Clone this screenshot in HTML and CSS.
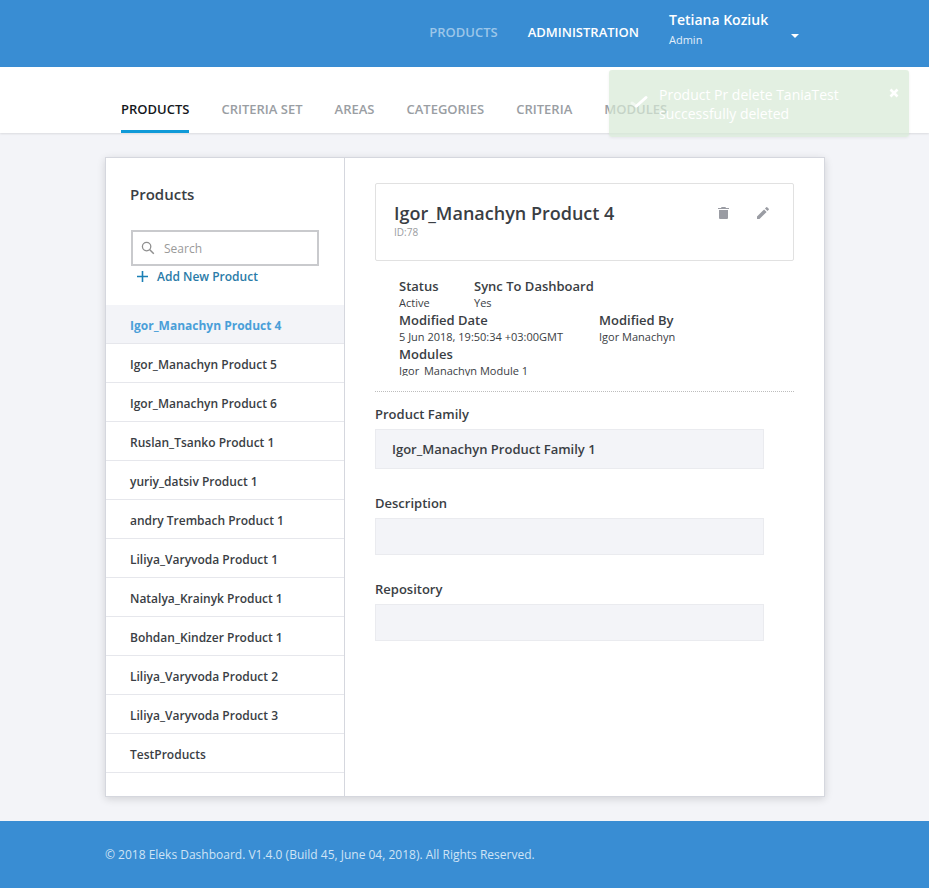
FILE: index.html
```html
<!DOCTYPE html>
<html lang="en">
<head>
    <meta charset="UTF-8">
    <title>Eleks Dashboard</title>
    <link rel="stylesheet" href="styles.css">
</head>
<body>
    <header class="top-bar">
        <nav class="top-nav">
            <a class="top-link top-link-dim">PRODUCTS</a>
            <a class="top-link">ADMINISTRATION</a>
        </nav>
        <div class="user-box">
            <div class="user-name">Tetiana Koziuk</div>
            <div class="user-role">Admin</div>
            <span class="user-caret"></span>
        </div>
    </header>

    <nav class="tabs">
        <a class="tab tab-active">PRODUCTS</a>
        <a class="tab">CRITERIA SET</a>
        <a class="tab">AREAS</a>
        <a class="tab">CATEGORIES</a>
        <a class="tab">CRITERIA</a>
        <a class="tab">MODULES</a>
    </nav>

    <div class="toast">
        <svg class="toast-check" width="20" height="20" viewBox="0 0 20 20"><path d="M3 13l4 3" fill="none" stroke="#fff" stroke-opacity="0.5" stroke-width="3" stroke-linecap="round"/><path d="M7.5 16L17 7.5" fill="none" stroke="#fff" stroke-width="3" stroke-linecap="round"/></svg>
        <div class="toast-text">Product Pr delete TaniaTest<br>successfully deleted</div>
        <svg class="toast-close" width="10" height="10" viewBox="0 0 10 10"><path d="M1.5 1.5l7 7M8.5 1.5l-7 7" fill="none" stroke="#fff" stroke-width="2.6"/></svg>
    </div>

    <main class="content">
        <div class="panel">
            <aside class="sidebar">
                <h2 class="sidebar-title">Products</h2>
                <div class="search">
                    <svg width="14" height="14" viewBox="0 0 14 14"><circle cx="5.6" cy="5.6" r="4.2" fill="none" stroke="#8f8f8f" stroke-width="1.3"/><path d="M8.8 8.8l4 4" stroke="#8f8f8f" stroke-width="1.5"/></svg>
                    <span class="search-text">Search</span>
                </div>
                <a class="add-link">
                    <svg width="11" height="11" viewBox="0 0 11 11"><path d="M5.5 0v11M0 5.5h11" stroke="#1b7fb5" stroke-width="1.6"/></svg>
                    Add New Product
                </a>
                <ul class="product-list">
                    <li class="product product-active">Igor_Manachyn Product 4</li>
                    <li class="product">Igor_Manachyn Product 5</li>
                    <li class="product">Igor_Manachyn Product 6</li>
                    <li class="product">Ruslan_Tsanko Product 1</li>
                    <li class="product">yuriy_datsiv Product 1</li>
                    <li class="product">andry Trembach Product 1</li>
                    <li class="product">Liliya_Varyvoda Product 1</li>
                    <li class="product">Natalya_Krainyk Product 1</li>
                    <li class="product">Bohdan_Kindzer Product 1</li>
                    <li class="product">Liliya_Varyvoda Product 2</li>
                    <li class="product">Liliya_Varyvoda Product 3</li>
                    <li class="product">TestProducts</li>
                </ul>
            </aside>

            <section class="details">
                <div class="title-card">
                    <div>
                        <h1 class="product-name">Igor_Manachyn Product 4</h1>
                        <div class="product-id">ID:78</div>
                    </div>
                    <div class="title-actions">
                        <svg width="11" height="12" viewBox="0 0 11 12"><path d="M1 3h9v8a1 1 0 0 1-1 1H2a1 1 0 0 1-1-1zM0 .9h3L3.6 0h3.8l.6.9h3v1.1H0z" fill="#9a9ca3"/></svg>
                        <svg width="12" height="12" viewBox="0 0 14 14"><path d="M0 11.1V14h2.9l8.3-8.3-2.9-2.9zM13.7 3.2a.8.8 0 0 0 0-1.1L11.9.3a.8.8 0 0 0-1.1 0L9.3 1.8l2.9 2.9z" fill="#9a9ca3"/></svg>
                    </div>
                </div>

                <div class="meta">
                    <div class="meta-row">
                        <div class="meta-status">
                            <div class="meta-label">Status</div>
                            <div class="meta-value">Active</div>
                        </div>
                        <div>
                            <div class="meta-label">Sync To Dashboard</div>
                            <div class="meta-value">Yes</div>
                        </div>
                    </div>
                    <div class="meta-row">
                        <div class="meta-date">
                            <div class="meta-label">Modified Date</div>
                            <div class="meta-value">5 Jun 2018, 19:50:34 +03:00GMT</div>
                        </div>
                        <div>
                            <div class="meta-label">Modified By</div>
                            <div class="meta-value">Igor Manachyn</div>
                        </div>
                    </div>
                    <div class="meta-row">
                        <div>
                            <div class="meta-label">Modules</div>
                            <div class="meta-value meta-clipped">Igor_Manachyn Module 1</div>
                        </div>
                    </div>
                </div>

                <div class="field field-first">
                    <div class="field-label">Product Family</div>
                    <div class="field-box field-box-tall">Igor_Manachyn Product Family 1</div>
                </div>
                <div class="field">
                    <div class="field-label">Description</div>
                    <div class="field-box"></div>
                </div>
                <div class="field">
                    <div class="field-label">Repository</div>
                    <div class="field-box"></div>
                </div>
            </section>
        </div>
    </main>

    <footer class="footer">© 2018 Eleks Dashboard. V1.4.0 (Build 45, June 04, 2018). All Rights Reserved.</footer>
</body>
</html>
```

FILE: styles.css
```css
* {
    box-sizing: border-box;
}
body {
    margin: 0;
    height: 888px;
    overflow: hidden;
    font-family: "Open Sans", sans-serif;
    font-size: 13px;
    color: #3a3e44;
    background-color: #f3f4f8;
    position: relative;
}
.top-bar {
    height: 67px;
    background-color: #398dd3;
    display: flex;
    justify-content: flex-end;
    padding-right: 129px;
    color: white;
}
.top-nav {
    display: flex;
    gap: 30px;
    padding-top: 23px;
    margin-right: 30px;
}
.top-link {
    font-size: 13px;
    font-weight: 600;
    line-height: 18px;
}
.top-link-dim {
    color: #9cc6e9;
}
.user-box {
    width: 131px;
    padding-top: 10px;
    position: relative;
}
.user-name {
    font-size: 14px;
    font-weight: 600;
    line-height: 19px;
}
.user-role {
    font-size: 11px;
    line-height: 15px;
    margin-top: 3px;
    color: #e3effa;
}
.user-caret {
    position: absolute;
    right: 1px;
    top: 34px;
    border-left: 4px solid transparent;
    border-right: 4px solid transparent;
    border-top: 4px solid white;
}
.tabs {
    height: 66px;
    background-color: white;
    box-shadow: 0 1px 2px rgba(0, 0, 0, 0.1);
    display: flex;
    gap: 32px;
    padding: 33px 0 0 121px;
}
.tab {
    height: 33px;
    font-size: 13px;
    font-weight: 600;
    line-height: 18px;
    color: #9a9ea3;
}
.tab-active {
    color: #15181c;
    border-bottom: 3px solid #0f9ad8;
}
.toast {
    position: absolute;
    left: 609px;
    top: 70px;
    width: 300px;
    height: 67px;
    background-color: rgba(215, 234, 214, 0.7);
    border-radius: 3px;
    box-shadow: 0 1px 3px rgba(0, 0, 0, 0.06);
    color: white;
    font-size: 14px;
    line-height: 19px;
    padding: 15px 0 0 50px;
}
.toast-check {
    position: absolute;
    left: 20px;
    top: 20px;
}
.toast-close {
    position: absolute;
    right: 10px;
    top: 18px;
}
.content {
    padding: 24px 0 0 105px;
    height: 688px;
}
.panel {
    width: 720px;
    height: 640px;
    background-color: white;
    border: 1px solid #d5d7de;
    box-shadow: 0 2px 8px rgba(0, 0, 0, 0.14);
    display: flex;
}
.sidebar {
    width: 239px;
    border-right: 1px solid #d5d7de;
}
.sidebar-title {
    margin: 0;
    padding: 26px 0 0 24px;
    font-size: 15px;
    font-weight: 600;
    line-height: 21px;
}
.search {
    width: 188px;
    height: 36px;
    margin: 25px 0 0 25px;
    border: 2px solid #c9cacd;
    display: flex;
    align-items: center;
    gap: 9px;
    padding-left: 8px;
}
.search-text {
    font-size: 12px;
    color: #9a9a9a;
}
.add-link {
    display: flex;
    align-items: center;
    gap: 9px;
    margin: 2px 0 0 31px;
    height: 16px;
    font-size: 12px;
    font-weight: 600;
    color: #2a7ba8;
}
.product-list {
    list-style-type: none;
    margin: 21px 0 0;
    padding: 0;
}
.product {
    height: 39px;
    line-height: 42px;
    padding-left: 24px;
    font-size: 12px;
    font-weight: 600;
    border-bottom: 1px solid #e6e7ec;
}
.product-active {
    background-color: #f3f4f8;
    color: #4a9fd8;
    font-weight: 700;
}
.details {
    flex: 1;
    padding: 25px 30px 0;
}
.title-card {
    height: 78px;
    border: 1px solid #e1e1e1;
    border-radius: 2px;
    padding: 17px 24px 0 18px;
    display: flex;
    justify-content: space-between;
}
.product-name {
    margin: 0;
    font-size: 18px;
    font-weight: 600;
    line-height: 24px;
}
.product-id {
    margin-top: 1px;
    font-size: 10px;
    line-height: 12px;
    color: #9a9da1;
}
.title-actions {
    display: flex;
    gap: 28px;
    padding-top: 6px;
    align-items: flex-start;
}
.meta {
    padding: 16px 0 5px 24px;
    border-bottom: 1px dotted #bdbdbd;
    height: 131px;
}
.meta-row {
    display: flex;
}
.meta-status {
    width: 75px;
}
.meta-date {
    width: 200px;
}
.meta-label {
    font-size: 13px;
    font-weight: 600;
    line-height: 18px;
}
.meta-value {
    font-size: 11px;
    line-height: 16px;
}
.meta-clipped {
    height: 13px;
    overflow: hidden;
}
.field {
    margin-top: 25px;
}
.field-first {
    margin-top: 13px;
}
.field-label {
    font-size: 13px;
    font-weight: 600;
    line-height: 18px;
    margin-bottom: 6px;
}
.field-box {
    width: 389px;
    height: 37px;
    background-color: #f3f4f8;
    border: 1px solid #eaebef;
    padding-left: 16px;
    font-size: 13px;
    font-weight: 600;
}
.field-box-tall {
    height: 40px;
    line-height: 38px;
}
.footer {
    height: 67px;
    background-color: #398dd3;
    color: #cfe4f6;
    font-size: 12px;
    line-height: 67px;
    padding-left: 105px;
}
```
